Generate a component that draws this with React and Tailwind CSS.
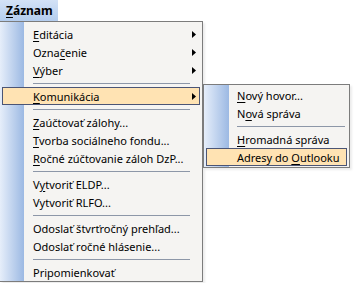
import React from 'react'

const Arrow = () => (
  <svg width="4" height="7" viewBox="0 0 4 7" className="absolute right-[3px] top-[5px]">
    <path d="M0 0 L4 3.5 L0 7 Z" fill="#000" />
  </svg>
)

const Item = ({ children, arrow, active }) => (
  <div
    className={
      'relative h-[18px] mx-[2px] flex items-center pl-[30px] ' +
      (active ? 'bg-[#ffe3b3] border border-[#4b5575]' : 'border border-transparent')
    }
  >
    <span className="leading-none whitespace-nowrap">{children}</span>
    {arrow && <Arrow />}
  </div>
)

const Sep = ({ right = 'mr-[12px]' }) => (
  <div className={'h-[8px] flex items-center ml-[33px] ' + right}>
    <div className="h-px w-full bg-[#8d97a8]" />
  </div>
)

const U = ({ children }) => <span className="underline underline-offset-2">{children}</span>

export default function App() {
  return (
    <div
      className="relative w-[355px] h-[283px] bg-white overflow-hidden text-[11px] text-black"
      style={{ fontFamily: '"Noto Sans", "Open Sans", sans-serif' }}
    >
      {/* menu bar tab */}
      <div className="w-[58px] h-[21px] flex items-center pl-[6px] text-[12px] font-bold bg-[linear-gradient(to_bottom,#d3e2f6,#b4cdee)]">
        <span><U>Z</U>áznam</span>
      </div>

      {/* main dropdown */}
      <div className="absolute left-0 top-[21px] w-[203px] h-[261px] border border-[#7c7c7c] border-l-0 pt-[3px] shadow-[2px_2px_2px_rgba(0,0,0,0.08)] bg-[linear-gradient(to_right,#e6eefa_0px,#9cb9e3_24px,#f5f4f2_24px)]">
        <Item arrow><U>E</U>ditácia</Item>
        <Item arrow>Ozna<U>č</U>enie</Item>
        <Item arrow><U>V</U>ýber</Item>
        <Sep />
        <Item arrow active><U>K</U>omunikácia</Item>
        <Sep />
        <Item><U>Z</U>aúčtovať zálohy...</Item>
        <Item><U>T</U>vorba sociálneho fondu...</Item>
        <Item><U>R</U>očné zúčtovanie záloh DzP...</Item>
        <Sep />
        <Item>V<U>y</U>tvoriť ELDP...</Item>
        <Item>Vytvoriť RLFO...</Item>
        <Sep />
        <Item>Odoslať štvrťročný prehľad...</Item>
        <Item>Odoslať ročné hlásenie...</Item>
        <Sep />
        <Item>Pripomienkovať</Item>
      </div>

      {/* submenu */}
      <div className="absolute left-[203px] top-[84px] w-[147px] border border-[#7c7c7c] py-[1px] shadow-[2px_2px_2px_rgba(0,0,0,0.08)] bg-[linear-gradient(to_right,#e6eefa_0px,#9cb9e3_25px,#f5f4f2_25px)]">
        <Item><U>N</U>ový hovor...</Item>
        <Item>N<U>o</U>vá správa</Item>
        <Sep right="mr-[4px]" />
        <Item><U>H</U>romadná správa</Item>
        <Item active>Adresy do <U>O</U>utlooku</Item>
      </div>
    </div>
  )
}
